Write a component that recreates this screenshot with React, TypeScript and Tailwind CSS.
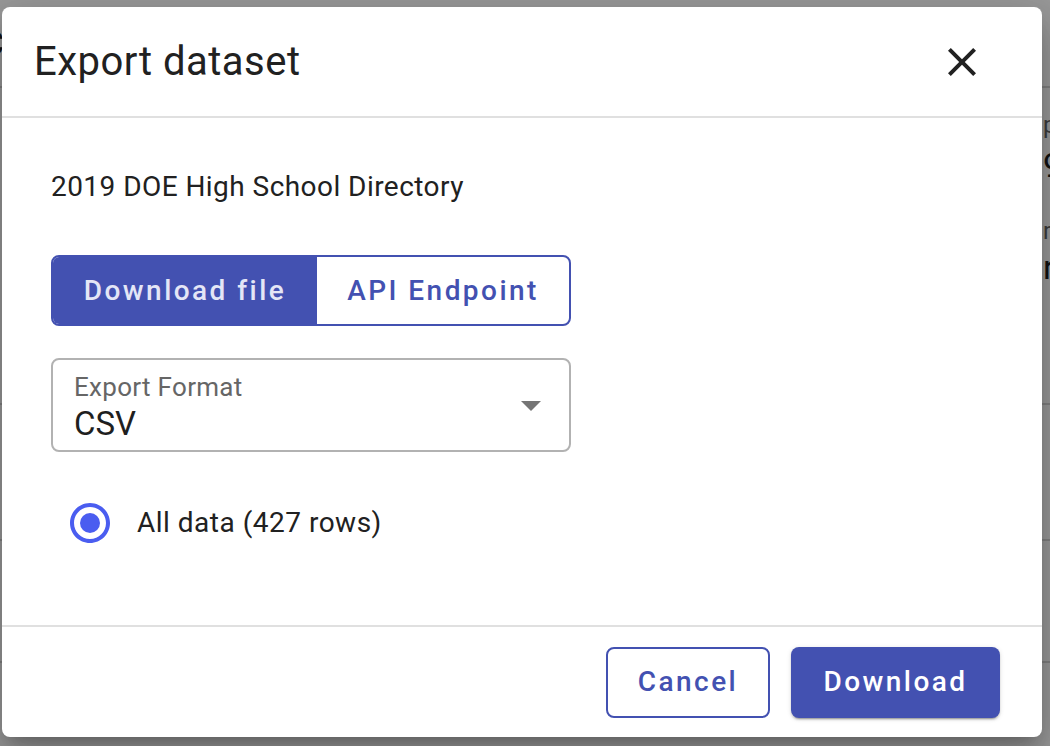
import React from 'react';

const indigo = '#4351b1';

function CloseIcon() {
  return (
    <svg width="48" height="48" viewBox="0 0 24 24" fill="#212121">
      <path d="M19 6.41L17.59 5 12 10.59 6.41 5 5 6.41 10.59 12 5 17.59 6.41 19 12 13.41 17.59 19 19 17.59 13.41 12z" />
    </svg>
  );
}

function ArrowDropDown() {
  return (
    <svg width="48" height="48" viewBox="0 0 24 24" fill="#757575">
      <path d="M7 10l5 5 5-5z" />
    </svg>
  );
}

function RadioChecked() {
  return (
    <svg width="48" height="48" viewBox="0 0 24 24" fill="#4a5df0">
      <path d="M12 2C6.48 2 2 6.48 2 12s4.48 10 10 10 10-4.48 10-10S17.52 2 12 2zm0 18c-4.42 0-8-3.58-8-8s3.58-8 8-8 8 3.58 8 8-3.58 8-8 8z" />
      <circle cx="12" cy="12" r="5" />
    </svg>
  );
}

// page that sits behind the modal, only its edges show
function BackgroundPage() {
  return (
    <div className="flex h-full w-full flex-col">
      <div className="flex h-[88px] items-center justify-between border-b-2 border-[#d6d6d6]">
        <span className="-ml-[18px] text-[34px] text-[#212121]">C</span>
      </div>
      <div className="flex h-[317px] justify-between border-b-2 border-[#d6d6d6]">
        <div className="-ml-[20px] flex flex-col pt-[30px]">
          <span className="text-[32px] leading-[40px] font-bold text-[#111]">U</span>
          <span className="mt-[104px] text-[24px] text-[#555]">s</span>
        </div>
        <div className="flex w-[8px] flex-col whitespace-nowrap pt-[22px] pl-[1px]">
          <span className="text-[24px] leading-[30px] text-[#666]">phone</span>
          <span className="mt-[4px] text-[34px] leading-[42px] text-[#212121]">9</span>
          <span className="mt-[30px] text-[24px] leading-[30px] text-[#666]">rec</span>
          <span className="text-[34px] leading-[42px] text-[#212121]">r</span>
        </div>
      </div>
      <div className="h-[136px] border-b-2 border-[#d6d6d6]" />
      <div className="flex h-[122px] justify-end border-b-2 border-[#d6d6d6]" />
    </div>
  );
}

export default function App() {
  return (
    <div className="relative h-[746px] w-[1050px] overflow-hidden bg-white font-[Roboto,'Liberation_Sans',sans-serif] text-[#212121]">
      <BackgroundPage />
      <div className="absolute inset-0 bg-black/40" />

      <div className="absolute left-[2px] top-[7px] flex h-[730px] w-[1040px] flex-col rounded-[8px] bg-white shadow-[0_11px_15px_-7px_rgba(0,0,0,0.2),0_24px_38px_3px_rgba(0,0,0,0.14),0_9px_46px_8px_rgba(0,0,0,0.12)]">
        {/* header */}
        <div className="flex h-[111px] shrink-0 items-center justify-between border-b-2 border-[#e0e0e0] pl-[32px] pr-[56px]">
          <h2 className="text-[40px] leading-none font-normal tracking-[0.5px] text-[#212121]">
            Export dataset
          </h2>
          <button className="flex items-center justify-center">
            <CloseIcon />
          </button>
        </div>

        {/* body */}
        <div className="flex flex-1 flex-col pl-[49px] pt-[53px]">
          <p className="text-[28px] leading-[32px] tracking-[0.45px]">
            2019 DOE High School Directory
          </p>

          <div className="mt-[52px] flex h-[71px] w-[520px] overflow-hidden rounded-[8px] border-2 border-[#4351b1]">
            <button className="flex w-[264px] items-center justify-center bg-[#4351b1] text-[28px] font-medium tracking-[2.45px] text-[#e4e6f6]">
              Download file
            </button>
            <button className="flex flex-1 items-center justify-center text-[28px] font-medium tracking-[2.45px] text-[#4351b1]">
              API Endpoint
            </button>
          </div>

          <div className="mt-[32px] flex h-[94px] w-[520px] items-center justify-between rounded-[8px] border-2 border-[#b2b2b2] pl-[21px] pr-[14px]">
            <div className="flex flex-col self-start pt-[12px]">
              <span className="text-[26px] leading-[30px] tracking-[0.3px] text-[#666666]">Export Format</span>
              <span className="mt-[4px] text-[33px] leading-[36px] text-[#1f1f1f]">CSV</span>
            </div>
            <ArrowDropDown />
          </div>

          <label className="mt-[47px] ml-[15px] flex items-center gap-[23px]">
            <RadioChecked />
            <span className="text-[28px] leading-[32px] tracking-[0.5px]">All data (427 rows)</span>
          </label>
        </div>

        {/* footer */}
        <div className="flex h-[112px] shrink-0 items-center justify-end gap-[21px] border-t-2 border-[#e0e0e0] pr-[42px]">
          <button className="flex h-[71px] w-[164px] items-center justify-center rounded-[8px] border-2 border-[#4351b1] text-[28px] font-medium tracking-[2.45px] text-[#4351b1]">
            Cancel
          </button>
          <button
            className="flex h-[71px] w-[209px] items-center justify-center rounded-[8px] bg-[#4351b1] text-[28px] font-medium tracking-[2.45px] text-white shadow-[0_3px_1px_-2px_rgba(0,0,0,0.2),0_2px_2px_0_rgba(0,0,0,0.14),0_1px_5px_0_rgba(0,0,0,0.12)]"
            style={{ backgroundColor: indigo }}
          >
            Download
          </button>
        </div>
      </div>
    </div>
  );
}
